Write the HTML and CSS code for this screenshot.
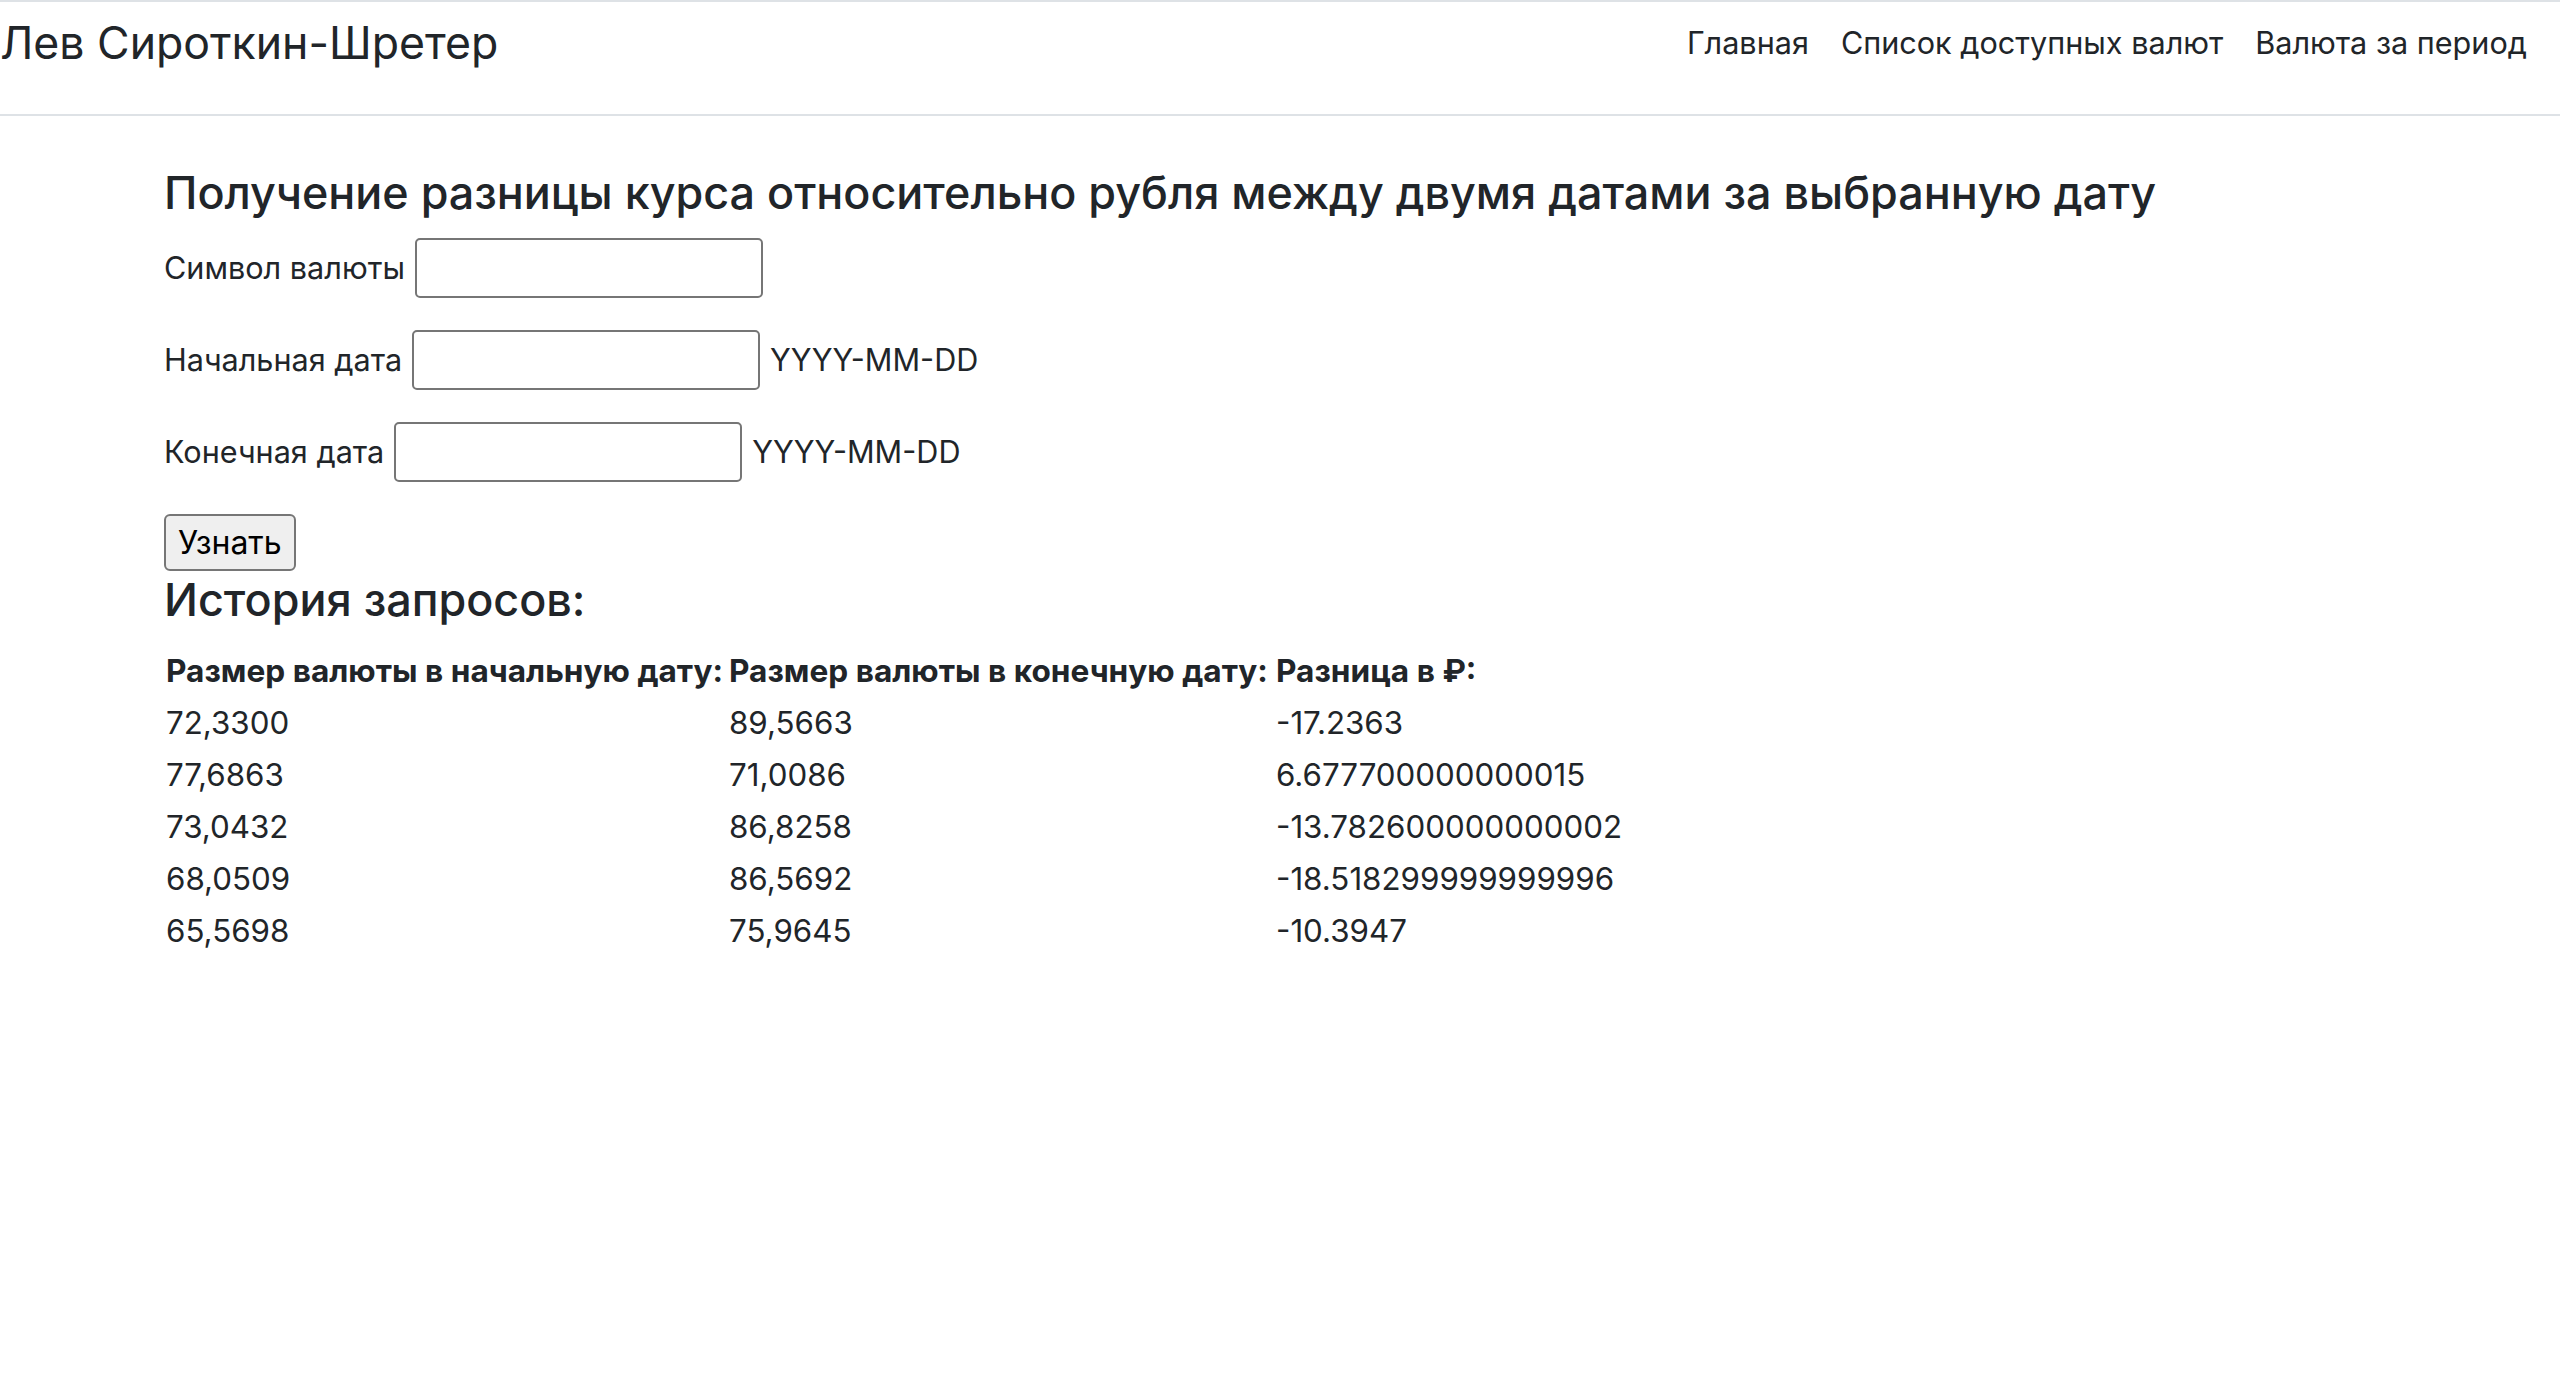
FILE: index.html
```html
<!DOCTYPE html>
<html lang="ru">
<head>
<meta charset="utf-8">
<title>Разница курса</title>
<link rel="stylesheet" href="styles.css">
</head>
<body>
<nav class="navbar">
  <a class="brand" href="#">Лев Сироткин-Шретер</a>
  <ul class="nav-links">
    <li><a href="#">Главная</a></li>
    <li><a href="#">Список доступных валют</a></li>
    <li><a href="#">Валюта за период</a></li>
  </ul>
</nav>
<main class="container">
  <h4 class="title">Получение разницы курса относительно рубля между двумя датами за выбранную дату</h4>
  <form class="form">
    <div class="row">
      <label>Символ валюты</label>
      <input type="text" class="field">
    </div>
    <div class="row">
      <label>Начальная дата</label>
      <input type="text" class="field">
      <span class="hint">YYYY-MM-DD</span>
    </div>
    <div class="row">
      <label>Конечная дата</label>
      <input type="text" class="field">
      <span class="hint">YYYY-MM-DD</span>
    </div>
    <button type="button" class="btn">Узнать</button>
  </form>
  <h4 class="history">История запросов:</h4>
  <table class="table">
    <thead>
      <tr><th class="c1">Размер валюты в начальную дату:</th><th class="c2">Размер валюты в конечную дату:</th><th>Разница в ₽:</th></tr>
    </thead>
    <tbody>
      <tr><td>72,3300</td><td>89,5663</td><td>-17.2363</td></tr>
      <tr><td>77,6863</td><td>71,0086</td><td>6.677700000000015</td></tr>
      <tr><td>73,0432</td><td>86,8258</td><td>-13.782600000000002</td></tr>
      <tr><td>68,0509</td><td>86,5692</td><td>-18.518299999999996</td></tr>
      <tr><td>65,5698</td><td>75,9645</td><td>-10.3947</td></tr>
    </tbody>
  </table>
</main>
</body>
</html>
```
FILE: styles.css
```css
* { box-sizing: border-box; }
html, body { margin: 0; padding: 0; }
body {
  font-family: Inter, "Noto Sans", "Liberation Sans", sans-serif;
  font-size: 30.6px;
  line-height: 48px;
  color: #212529;
  background: #fff;
}
a { color: #212529; text-decoration: none; }

.navbar {
  display: flex;
  justify-content: space-between;
  align-items: center;
  border-top: 2px solid #dee2e6;
  border-bottom: 2px solid #dee2e6;
  height: 116px;
  padding: 0 17px 30px 0;
}
.brand {
  font-size: 44.6px;
  line-height: 72px;
  white-space: nowrap;
}
.nav-links {
  display: flex;
  list-style: none;
  margin: 0;
  padding: 0;
}
.nav-links a {
  display: block;
  padding: 0 16px;
  line-height: 48px;
}

.container {
  max-width: 2280px;
  margin: 0 auto;
  padding: 48px 24px 0;
}
.title, .history {
  font-size: 44.9px;
  font-weight: 500;
  line-height: 58px;
  margin: 0 0 16px;
}
.form { margin: 0; }
.row {
  display: flex;
  align-items: center;
  gap: 10px;
  height: 60px;
  margin-bottom: 32px;
}
.field {
  width: 348px;
  height: 60px;
  border: 2px solid #767676;
  border-radius: 5px;
  background: #fff;
  font: inherit;
  padding: 2px 4px;
}
.btn {
  display: block;
  font: inherit;
  font-size: 32px;
  color: #000;
  background: #efefef;
  border: 2px solid #767676;
  border-radius: 6px;
  height: 57px;
  padding: 2px 12px;
  line-height: 48px;
}
.table {
  border-collapse: collapse;
}
.table th, .table td {
  padding: 2px;
  text-align: left;
  white-space: nowrap;
  vertical-align: middle;
  font-size: 31.3px;
}
.table th { font-weight: 700; font-size: 31.6px; }
.c1 { width: 563px; }
.c2 { width: 547px; }
```
